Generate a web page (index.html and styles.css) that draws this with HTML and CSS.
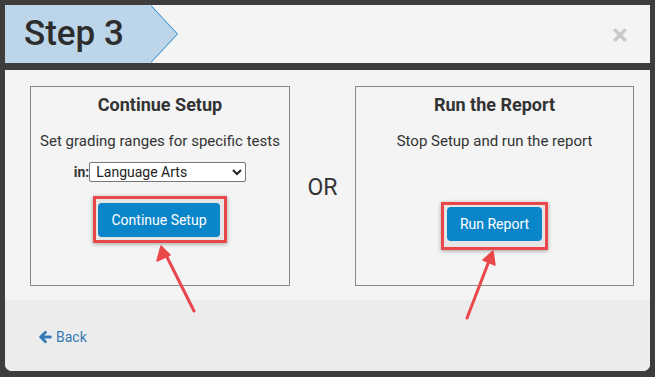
FILE: index.html
```html
<!DOCTYPE html>
<html lang="en">
<head>
  <meta charset="UTF-8">
  <title>Step 3</title>
  <link rel="stylesheet" href="styles.css">
</head>
<body>
  <div class="modal">
    <div class="modal-header">
      <div class="step">Step 3</div>
      <span class="close">&times;</span>
    </div>

    <div class="modal-body">
      <div class="choice">
        <h3>Continue Setup</h3>
        <p>Set grading ranges for specific tests</p>
        <div class="subject">
          <label>in:</label>
          <select>
            <option>Language Arts</option>
          </select>
        </div>
        <div class="highlight hl-left">
          <button class="btn">Continue Setup</button>
        </div>
      </div>

      <div class="or">OR</div>

      <div class="choice">
        <h3>Run the Report</h3>
        <p>Stop Setup and run the report</p>
        <div class="highlight hl-right">
          <button class="btn">Run Report</button>
        </div>
      </div>
    </div>

    <div class="modal-footer">
      <a class="back" href="#">
        <svg width="14" height="14" viewBox="0 0 14 14"><path d="M7.5 2.2 L2.6 7 L7.5 11.8 M3 7 H12.5" fill="none" stroke="#337ab7" stroke-width="2.8" stroke-linecap="round" stroke-linejoin="round"/></svg>
        Back
      </a>
    </div>
  </div>

  <!-- callout arrows -->
  <svg class="callouts" width="655" height="377" viewBox="0 0 655 377">
    <g stroke="#ea474b" stroke-width="3" stroke-linecap="round" fill="#ea474b">
      <line x1="194" y1="311" x2="166" y2="255"/>
      <polygon points="161,246 157,261 170,255" stroke-width="1.5" stroke-linejoin="round"/>
      <line x1="467" y1="318" x2="489" y2="261"/>
      <polygon points="493,251 483,260 495,265" stroke-width="1.5" stroke-linejoin="round"/>
    </g>
  </svg>
</body>
</html>
```

FILE: styles.css
```css
body {
  margin: 0;
  background: #3d3d3d;
  font-family: Roboto, "Liberation Sans", Arial, sans-serif;
  color: #333;
}
.modal {
  margin: 5px 0 0 5px;
  width: 645px;
  height: 366px;
  background: #f4f4f4;
  border-radius: 0 0 7px 7px;
  display: flex;
  flex-direction: column;
}
.modal-header {
  height: 58px;
  border-bottom: 7px solid #3d3d3d;
  display: flex;
  align-items: center;
  justify-content: space-between;
}
.step {
  height: 58px;
  width: 145px;
  background: #bcd5e8;
  position: relative;
  font-size: 35px;
  font-weight: 500;
  line-height: 58px;
  padding-left: 19px;
  box-sizing: border-box;
  color: #2d2d2d;
}
.step::after {
  content: "";
  position: absolute;
  top: 0;
  left: 145px;
  width: 0;
  height: 0;
  border-top: 29px solid transparent;
  border-bottom: 29px solid transparent;
  border-left: 27px solid #bcd5e8;
  filter: drop-shadow(1.5px 0 0 #1e88d2);
}
.close {
  font-size: 30px;
  font-weight: 700;
  color: #c9c9c9;
  margin-right: 22px;
  margin-top: 2px;
  line-height: 1;
}
.modal-body {
  height: 230px;
  padding: 16px 16px 0 25px;
  box-sizing: border-box;
  display: grid;
  grid-template-columns: 260px 65px 279px;
  align-items: start;
}
.choice {
  height: 200px;
  border: 1px solid #888;
  box-sizing: border-box;
  display: flex;
  flex-direction: column;
  align-items: center;
}
.choice h3 {
  margin: 8px 0 0;
  font-size: 18px;
  font-weight: 700;
  line-height: 20px;
}
.choice p {
  margin: 16px 0 0;
  font-size: 15px;
  line-height: 20px;
}
.subject {
  margin-top: 11px;
  display: flex;
  align-items: center;
  font-size: 14px;
}
.subject label {
  font-weight: 700;
}
.subject select {
  width: 157px;
  height: 20px;
  font-family: Roboto, "Liberation Sans", Arial, sans-serif;
  font-size: 14px;
  color: #222;
  background: #fff;
  border: 1px solid #777;
  border-radius: 2px;
  padding: 0 2px;
}
.or {
  align-self: center;
  text-align: center;
  font-size: 23px;
  margin-top: -12px;
}
.highlight {
  border: 3px solid #ea474b;
  background: #e6e6e6;
  box-shadow: 0 1px 4px rgba(0, 0, 0, 0.35);
  display: flex;
}
.hl-left {
  margin-top: 14px;
  padding: 4px 4px 3px 2px;
}
.hl-right {
  margin-top: 51px;
  padding: 2px 3px 6px 3px;
}
.btn {
  height: 34px;
  background: #0a85c9;
  color: #fff;
  border: none;
  border-radius: 4px;
  font-family: Roboto, "Liberation Sans", Arial, sans-serif;
  font-size: 14px;
  padding: 0 13px;
}
.modal-footer {
  flex: 1;
  background: #ececec;
  border-radius: 0 0 7px 7px;
  display: flex;
  align-items: center;
  padding-left: 33px;
  padding-top: 2px;
}
.back {
  color: #337ab7;
  font-size: 14px;
  text-decoration: none;
  display: flex;
  align-items: center;
  gap: 4px;
}
.callouts {
  position: absolute;
  top: 0;
  left: 0;
  pointer-events: none;
}
```
